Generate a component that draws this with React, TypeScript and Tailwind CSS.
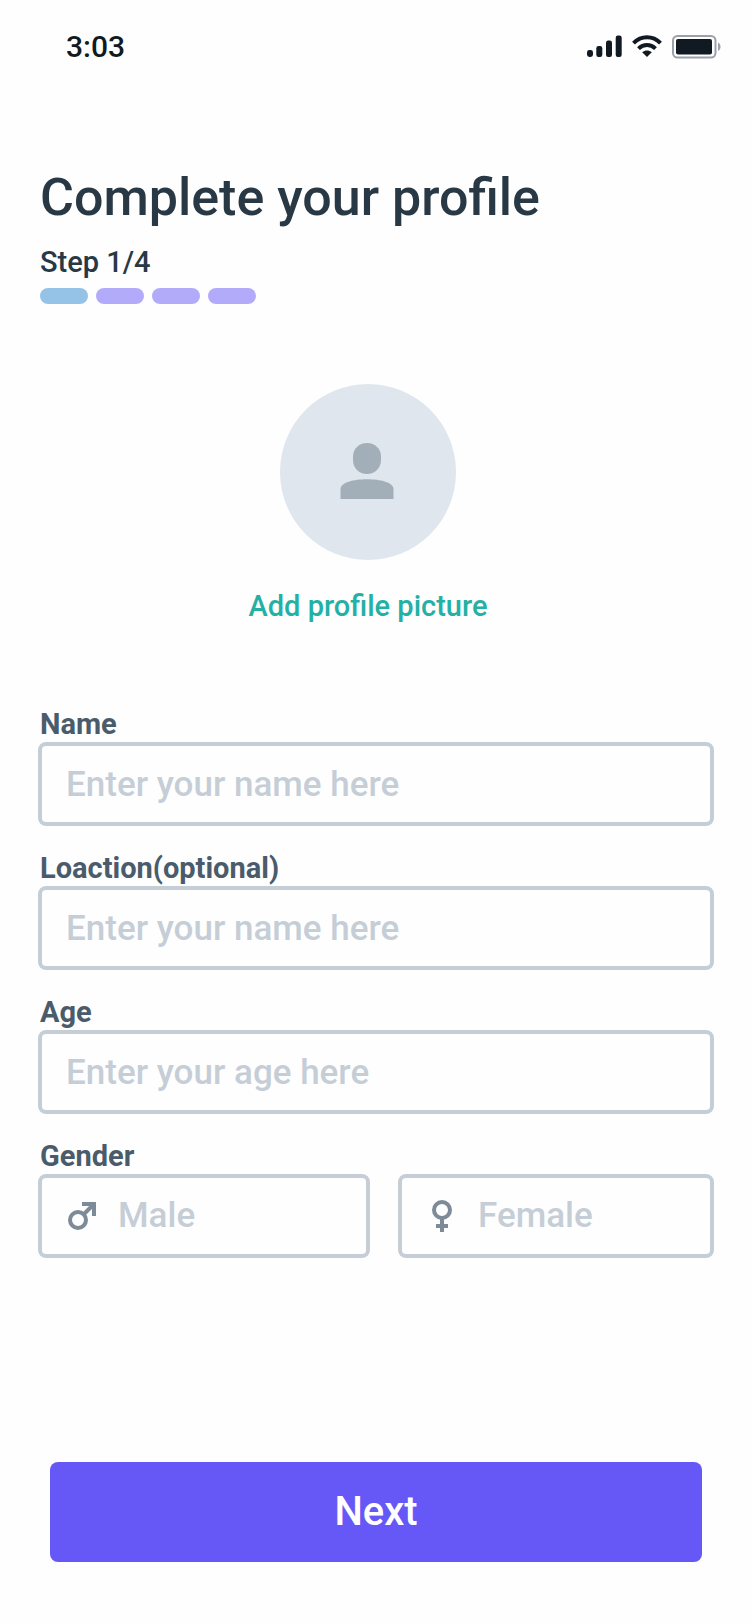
import { useState } from "react";

const fields = [
  { id: "name", label: "Name", placeholder: "Enter your name here" },
  { id: "location", label: "Loaction(optional)", placeholder: "Enter your name here" },
  { id: "age", label: "Age", placeholder: "Enter your age here" },
];

function StatusBar() {
  return (
    <div className="flex h-[94px] items-center justify-between pl-16 pr-[31px] text-[#111a22]">
      <span className="pl-0.5 text-[30px] leading-9 font-medium">3:03</span>
      <div className="flex items-center gap-2.5">
        <svg width="35" height="24" viewBox="0 0 35 24" fill="currentColor">
          <rect x="0" y="15" width="6" height="7" rx="2.4" />
          <rect x="9.300" y="11" width="6" height="11" rx="2.2" />
          <rect x="19" y="5.500" width="6" height="16.5" rx="2.2" />
          <rect x="28.7" y="0.500" width="6" height="21.5" rx="2.2" />
        </svg>
        <svg width="30" height="24" viewBox="0 0 30 24" fill="none" stroke="currentColor" strokeWidth="4">
          <path d="M1.500 8.200C9.200 0.400 20.800 0.400 28.500 8.200" />
          <path d="M6.500 13.600C11.500 8.900 18.500 8.900 23.500 13.600" />
          <path d="M10.200 17.200C13.200 14.800 16.800 14.800 19.800 17.200L15 22Z" fill="currentColor" stroke="none" />
        </svg>
        <svg width="49" height="24" viewBox="0 0 49 24">
          <rect x="1" y="1" width="42.5" height="21.5" rx="4.5" fill="none" stroke="#9aa1aa" strokeWidth="2" />
          <rect x="4" y="4" width="36" height="15.5" rx="2" fill="currentColor" />
          <path d="M46 7.500C49.400 9 49.400 14.500 46 16Z" fill="#9aa1aa" />
        </svg>
      </div>
    </div>
  );
}

function MaleIcon() {
  return (
    <svg width="32" height="32" viewBox="0 0 32 32" fill="none" stroke="#7d8b98" strokeWidth="4">
      <circle cx="12" cy="20" r="8" />
      <path d="M18 14L27 5M16 4H28V16" />
    </svg>
  );
}

function FemaleIcon() {
  return (
    <svg width="32" height="32" viewBox="0 0 32 32" fill="none" stroke="#7d8b98" strokeWidth="4">
      <circle cx="16" cy="10" r="8" />
      <path d="M16 18V32M10 26H22" />
    </svg>
  );
}

const genders = [
  { value: "male", label: "Male", icon: <MaleIcon /> },
  { value: "female", label: "Female", icon: <FemaleIcon /> },
];

export default function App() {
  const [gender, setGender] = useState("");

  return (
    <main className="w-full bg-[#fefefe] pb-[62px] font-['Roboto',sans-serif] font-medium">
      <StatusBar />

      <header className="px-10 pt-[68px] text-[#283845]">
        <h1 className="text-[52px] leading-[72px]">Complete your profile</h1>
        <p className="pt-2.5 text-[29px] leading-9">Step 1/4</p>
        <div className="flex gap-2 pt-2">
          <span className="h-4 w-12 rounded-full bg-[#95c3e8]" />
          <span className="h-4 w-12 rounded-full bg-[#b2abfa]" />
          <span className="h-4 w-12 rounded-full bg-[#b2abfa]" />
          <span className="h-4 w-12 rounded-full bg-[#b2abfa]" />
        </div>
      </header>

      <div className="flex justify-center pt-20 pr-4">
        <button type="button" className="flex flex-col items-center text-[#25b0a5]">
          <span className="flex size-44 items-center justify-center rounded-full bg-[#dfe6ee]">
            <svg width="56" height="60" viewBox="0 0 56 60" fill="#a3afb8">
              <path d="M27 1C35 1 41 7 41 14V18C41 26 35 32 27 32S13 26 13 18V14C13 7 19 1 27 1Z" />
              <path d="M0.500 57V47C0.500 34 53.500 34 53.500 47V57Z" />
            </svg>
          </span>
          <span className="pt-7 text-[29px] leading-9">Add profile picture</span>
        </button>
      </div>

      <form onSubmit={(e) => e.preventDefault()}>
        <div className="flex flex-col gap-6 px-[38px] pt-[82px]">
          {fields.map((field) => (
            <div key={field.id}>
              <label htmlFor={field.id} className="block pl-0.5 text-[29px] leading-9 font-bold text-[#4a5c6b]">
                {field.label}
              </label>
              <input
                id={field.id}
                type="text"
                placeholder={field.placeholder}
                className="block h-[84px] w-full rounded-lg border-4 border-[#c5ced7] bg-transparent px-6 text-[35px] text-[#283845] placeholder:text-[#c5ced7]"
              />
            </div>
          ))}

          <fieldset>
            <legend className="pl-0.5 text-[29px] leading-9 font-bold text-[#4a5c6b]">Gender</legend>
            <div className="grid grid-cols-[332fr_316fr] gap-7">
              {genders.map((option) => (
                <label
                  key={option.value}
                  className="flex h-[84px] items-center gap-5 rounded-lg border-4 border-[#c5ced7] px-6 text-[35px] text-[#c5ced7] has-checked:border-[#6658f6]"
                >
                  <input
                    type="radio"
                    name="gender"
                    value={option.value}
                    checked={gender === option.value}
                    onChange={() => setGender(option.value)}
                    className="sr-only"
                  />
                  {option.icon}
                  {option.label}
                </label>
              ))}
            </div>
          </fieldset>
        </div>

        <div className="px-[50px] pt-[204px]">
          <button type="submit" className="h-[100px] w-full rounded-lg bg-[#6658f6] text-[40px] text-white">
            Next
          </button>
        </div>
      </form>
    </main>
  );
}
